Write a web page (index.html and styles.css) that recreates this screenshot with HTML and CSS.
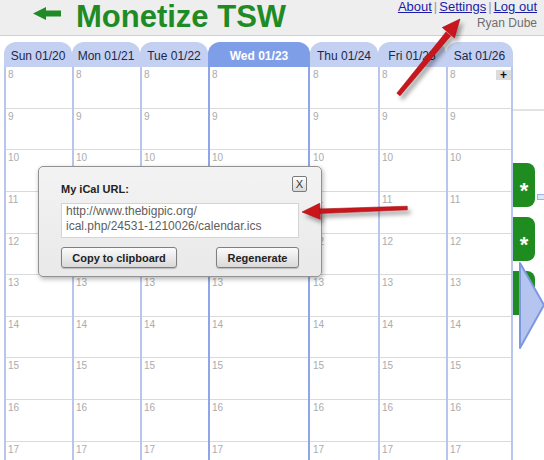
FILE: index.html
```html
<!DOCTYPE html>
<html lang="en">
<head>
    <meta charset="UTF-8">
    <title>Monetize TSW - Calendar</title>
    <link rel="stylesheet" href="styles.css">
</head>
<body>
    <main class="page">
        <header class="topbar">
            <div class="brand">
                <svg class="backArrow" width="28" height="13" viewBox="0 0 28 13">
                    <polygon points="0,6.5 13,0 13,3.5 28,3.5 28,9.5 13,9.5 13,13" fill="#1f8b24"/>
                </svg>
                <span class="brandText">Monetize TSW</span>
            </div>
            <div class="account">
                <p class="accountLinks"><a href="#">About</a><span class="sep">|</span><a href="#">Settings</a><span class="sep">|</span><a href="#">Log out</a></p>
                <p class="userName">Ryan Dube</p>
            </div>
        </header>

        <section class="content">
            <div class="calendar">
                <div class="day">
                    <div class="dayHead">Sun 01/20</div>
                    <div class="dayBody">
                        <div class="hour">8</div><div class="hour">9</div><div class="hour">10</div><div class="hour">11</div><div class="hour">12</div>
                        <div class="hour">13</div><div class="hour">14</div><div class="hour">15</div><div class="hour">16</div><div class="hour">17</div>
                    </div>
                </div>
                <div class="day">
                    <div class="dayHead">Mon 01/21</div>
                    <div class="dayBody">
                        <div class="hour">8</div><div class="hour">9</div><div class="hour">10</div><div class="hour">11</div><div class="hour">12</div>
                        <div class="hour">13</div><div class="hour">14</div><div class="hour">15</div><div class="hour">16</div><div class="hour">17</div>
                    </div>
                </div>
                <div class="day">
                    <div class="dayHead">Tue 01/22</div>
                    <div class="dayBody">
                        <div class="hour">8</div><div class="hour">9</div><div class="hour">10</div><div class="hour">11</div><div class="hour">12</div>
                        <div class="hour">13</div><div class="hour">14</div><div class="hour">15</div><div class="hour">16</div><div class="hour">17</div>
                    </div>
                </div>
                <div class="day today">
                    <div class="dayHead">Wed 01/23</div>
                    <div class="dayBody">
                        <div class="hour">8</div><div class="hour">9</div><div class="hour">10</div><div class="hour">11</div><div class="hour">12</div>
                        <div class="hour">13</div><div class="hour">14</div><div class="hour">15</div><div class="hour">16</div><div class="hour">17</div>
                    </div>
                </div>
                <div class="day afterToday">
                    <div class="dayHead">Thu 01/24</div>
                    <div class="dayBody">
                        <div class="hour">8</div><div class="hour">9</div><div class="hour">10</div><div class="hour">11</div><div class="hour">12</div>
                        <div class="hour">13</div><div class="hour">14</div><div class="hour">15</div><div class="hour">16</div><div class="hour">17</div>
                    </div>
                </div>
                <div class="day">
                    <div class="dayHead">Fri 01/25</div>
                    <div class="dayBody">
                        <div class="hour">8</div><div class="hour">9</div><div class="hour">10</div><div class="hour">11</div><div class="hour">12</div>
                        <div class="hour">13</div><div class="hour">14</div><div class="hour">15</div><div class="hour">16</div><div class="hour">17</div>
                    </div>
                </div>
                <div class="day lastDay">
                    <div class="dayHead">Sat 01/26</div>
                    <div class="dayBody">
                        <div class="hour">8<span class="addBtn">+</span></div><div class="hour">9</div><div class="hour">10</div><div class="hour">11</div><div class="hour">12</div>
                        <div class="hour">13</div><div class="hour">14</div><div class="hour">15</div><div class="hour">16</div><div class="hour">17</div>
                    </div>
                </div>
            </div>

            <aside class="side">
                <div class="sideRule"></div>
                <div class="sideTab">*</div>
                <div class="sideTab">*</div>
                <div class="sideTab">*</div>
                <span class="sideIcon"></span>
                <svg class="nextArrow" width="26" height="88" viewBox="0 0 26 88">
                    <polygon points="1,1 25,43 1,86" fill="#b5c5f0" stroke="#7e98e0" stroke-width="2" stroke-linejoin="round"/>
                </svg>
            </aside>
        </section>

        <!-- popup -->
        <div class="icalPopup">
            <div class="popupHead">
                <p class="popupTitle">My iCal URL:</p>
                <button class="closeBtn">X</button>
            </div>
            <div class="urlBox">http://www.thebigpic.org/<br>ical.php/24531-1210026/calendar.ics</div>
            <div class="popupBtns">
                <button class="popupBtn copyBtn">Copy to clipboard</button>
                <button class="popupBtn regenBtn">Regenerate</button>
            </div>
        </div>

        <!-- annotation arrows -->
        <svg class="notes" width="544" height="460" viewBox="0 0 544 460">
            <defs>
                <filter id="shade" x="-20%" y="-20%" width="140%" height="140%">
                    <feDropShadow dx="3" dy="4" stdDeviation="2" flood-color="#000" flood-opacity="0.35"/>
                </filter>
            </defs>
            <g filter="url(#shade)" fill="#c8141c" stroke="#a50d12" stroke-width="0.6">
                <polygon points="396.8,93.2 400,95.8 450.6,36 446,32"/>
                <polygon points="460,19 454.5,37.9 442.3,27.5"/>
                <polygon points="407.2,206.2 407.4,209.8 318,213.6 318,209"/>
                <polygon points="302,212 320.3,219.3 319.7,203.3"/>
            </g>
        </svg>
    </main>
</body>
</html>
```
FILE: styles.css
```css
*{
    margin: 0; padding: 0;
    box-sizing: border-box;
}
html, body{
    width: 544px;
    height: 460px;
    overflow: hidden;
    background-color: #ffffff;
}
body{
    font-family: "Liberation Sans", Arial, sans-serif;
}
.page{
    position: relative;
    width: 544px;
    height: 460px;
}

/* header */
.topbar{
    height: 36px;
    background-color: #eeeeee;
    border-bottom: 1px solid #d0d0d0;
    display: flex;
    justify-content: space-between;
}
.brand{
    display: flex;
    align-items: flex-start;
    padding-left: 33px;
}
.backArrow{
    margin-top: 7px;
    margin-right: 15px;
}
.brandText{
    font-size: 31px;
    line-height: 33px;
    font-weight: 700;
    color: #1f8b24;
}
.account{
    padding-right: 7px;
    text-align: right;
}
.accountLinks{
    font-size: 13px;
    line-height: 13px;
}
.accountLinks a{
    color: #1c1ca8;
}
.sep{
    color: #999999;
    margin: 0 2px;
}
.userName{
    margin-top: 3px;
    font-size: 12px;
    line-height: 14px;
    color: #6e6e6e;
}

/* calendar */
.content{
    display: flex;
    margin-top: 6px;
}
.calendar{
    margin-left: 4px;
    display: grid;
    grid-template-columns: 68px 68px 68px 102px 68px 68px 67px;
}
.day{
    display: flex;
    flex-direction: column;
}
.dayHead{
    height: 25px;
    padding-top: 4px;
    line-height: 20px;
    font-size: 12px;
    text-align: center;
    color: #1b2848;
    background-color: #c4d0f2;
    border-radius: 12px 12px 0 0;
}
.dayBody{
    border-left: 2px solid #b8c6ee;
}
.hour{
    height: 41.625px;
    border-bottom: 1px solid #dadada;
    padding: 2px 0 0 2px;
    font-size: 10px;
    line-height: 11px;
    color: #ababab;
    display: flex;
    justify-content: space-between;
    align-items: flex-start;
}
.today .dayHead{
    background-color: #7f9ee8;
    color: #ffffff;
    font-weight: 700;
}
.today .dayBody{
    border-left-color: #8ea6e8;
    border-right: 2px solid #8ea6e8;
}
.afterToday .dayBody{
    border-left: 0;
}
.afterToday .hour{
    padding-left: 3px;
}
.lastDay .dayBody{
    border-right: 2px solid #b8c6ee;
}
.addBtn{
    width: 15px;
    height: 10px;
    margin-top: 1px;
    background-color: #dcdcdc;
    color: #111111;
    font-size: 12px;
    line-height: 10px;
    font-weight: 700;
    text-align: center;
}

/* right side */
.side{
    position: relative;
    width: 31px;
    display: flex;
    flex-direction: column;
}
.sideRule{
    height: 2px;
    margin-top: 67px;
    background-color: #e2e2e2;
}
.sideTab{
    width: 22px;
    height: 44px;
    background-color: #1e8c1f;
    border-radius: 0 8px 8px 0;
    color: #ffffff;
    font-size: 22px;
    font-weight: 700;
    line-height: 44px;
    padding-top: 6px;
    text-align: center;
}
.sideTab:nth-child(2){
    margin-top: 52px;
}
.sideTab + .sideTab{
    margin-top: 10px;
}
.sideIcon{
    position: absolute;
    left: 24px;
    top: 152px;
    width: 8px;
    height: 6px;
    border: 1px solid #9fb2e6;
    background-color: #dfe7fb;
}
.nextArrow{
    position: absolute;
    left: 6px;
    top: 220px;
}

/* popup */
.icalPopup{
    position: absolute;
    left: 38px;
    top: 166px;
    width: 284px;
    height: 111px;
    padding: 9px 22px 0 22px;
    background: linear-gradient(#f3f3f3, #e9e9e9);
    border: 1px solid #929292;
    border-radius: 5px;
    box-shadow: 1px 2px 5px rgba(0, 0, 0, 0.3);
}
.popupHead{
    display: flex;
    justify-content: space-between;
    align-items: flex-start;
}
.popupTitle{
    margin-top: 7px;
    font-size: 11px;
    line-height: 13px;
    font-weight: 700;
    color: #222222;
}
.closeBtn{
    width: 15px;
    height: 16px;
    margin-right: -8px;
    border: 1px solid #7b7b7b;
    border-radius: 2px;
    background: linear-gradient(#ffffff, #d8d8d8);
    font-family: "Liberation Sans", Arial, sans-serif;
    font-size: 11px;
    color: #333333;
}
.urlBox{
    margin-top: 7px;
    height: 35px;
    padding: 0 4px;
    background-color: #ffffff;
    border: 1px solid #d4d4d4;
    font-size: 12px;
    line-height: 14.5px;
    color: #5e5e5e;
}
.popupBtns{
    margin-top: 9px;
    display: flex;
    justify-content: space-between;
}
.popupBtn{
    height: 21px;
    border: 1px solid #7f7f7f;
    border-radius: 3px;
    background: linear-gradient(#fbfbfb, #d9d9d9);
    box-shadow: 0 1px 1px rgba(0, 0, 0, 0.2);
    font-family: "Liberation Sans", Arial, sans-serif;
    font-size: 11px;
    font-weight: 700;
    color: #222222;
}
.copyBtn{
    width: 116px;
}
.regenBtn{
    width: 83px;
}

/* annotations */
.notes{
    position: absolute;
    left: 0;
    top: 0;
    pointer-events: none;
}
```
